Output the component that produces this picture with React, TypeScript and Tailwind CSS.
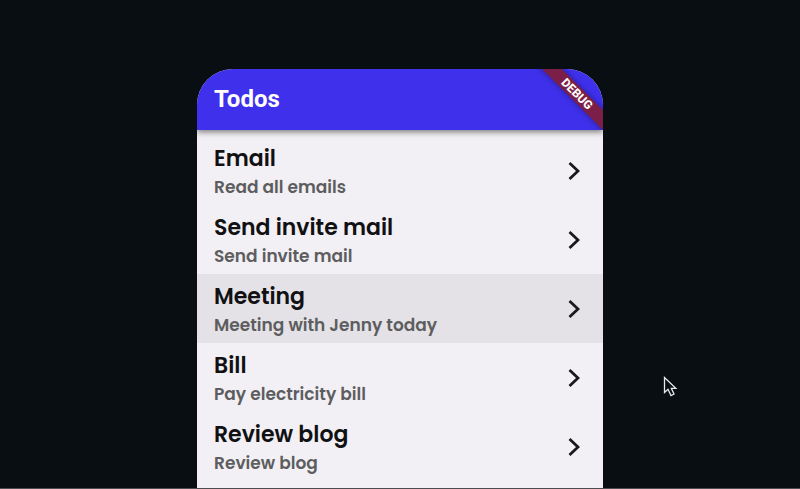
type Todo = { title: string; note: string; active?: boolean };

const todos: Todo[] = [
  { title: "Email", note: "Read all emails" },
  { title: "Send invite mail", note: "Send invite mail" },
  { title: "Meeting", note: "Meeting with Jenny today", active: true },
  { title: "Bill", note: "Pay electricity bill" },
  { title: "Review blog", note: "Review blog" },
];

function Chevron() {
  return (
    <svg className="h-5 w-3 shrink-0" viewBox="0 0 12 20" fill="none" aria-hidden="true">
      <path d="M1.5 2 L10 10 L1.5 18" stroke="#19191b" strokeWidth="2.8" />
    </svg>
  );
}

function TodoRow({ title, note, active }: Todo) {
  return (
    <li>
      <button
        type="button"
        className={`flex w-full items-center justify-between py-[6px] pr-[23px] pl-[17px] text-left ${
          active ? "bg-[#e4e2e6]" : ""
        }`}
      >
        <span className="flex flex-col">
          <span className="text-[22px] leading-[34px] font-semibold text-[#111113]">{title}</span>
          <span className="text-[17px] leading-[23px] font-semibold text-[#5d5d60]">{note}</span>
        </span>
        <Chevron />
      </button>
    </li>
  );
}

function Pointer() {
  return (
    <svg
      className="absolute top-[376px] left-[663px] h-[22px] w-[15px]"
      viewBox="0 0 15 22"
      aria-hidden="true"
    >
      <path
        d="M1.5 1.5 V16.5 L5 13.3 L8 19.5 L11 18 L8.3 12.3 H12.8 Z"
        fill="#080e12"
        stroke="#e8eaec"
        strokeWidth="1.3"
      />
    </svg>
  );
}

export default function App() {
  return (
    <div className="relative flex h-screen justify-center overflow-hidden border-b border-[#4a4c4f] bg-[#080e12] pt-[69px] font-['Poppins','Inter',sans-serif]">
      <main className="relative w-full max-w-[406px] overflow-hidden rounded-t-[36px] bg-[#f2f0f4]">
        <header className="relative bg-[#3f30ec] px-[17px] pt-4 pb-[17px] shadow-[0_2px_6px_rgba(0,0,0,0.5)]">
          <h1 className="font-['Roboto',sans-serif] text-2xl leading-7 font-bold text-white">Todos</h1>
          <div className="absolute inset-0 overflow-hidden">
            <span className="absolute top-[18px] -right-[24px] w-[100px] rotate-45 bg-[#7c1f48] text-center font-['Roboto',sans-serif] text-xs leading-[14px] font-extrabold text-white shadow-[0_0_6px_rgba(0,0,0,0.4)]">
              DEBUG
            </span>
          </div>
        </header>
        <ul className="pt-[6px]">
          {todos.map((todo) => (
            <TodoRow key={todo.title} {...todo} />
          ))}
        </ul>
      </main>
      <Pointer />
    </div>
  );
}
